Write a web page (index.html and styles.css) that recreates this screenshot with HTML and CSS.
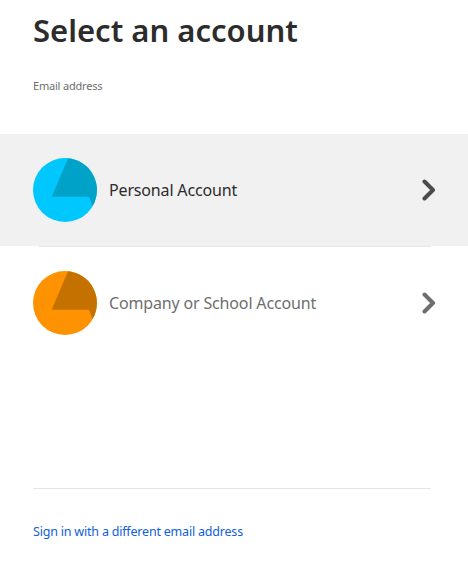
FILE: index.html
```html
<!DOCTYPE html>
<html lang="en">
<head>
    <meta charset="UTF-8">
    <title>Select an account</title>
    <link rel="stylesheet" href="styles.css">
</head>
<body>
    <div class="page">
        <div class="head">
            <h1 class="title">Select an account</h1>
            <div class="email">Email address</div>
        </div>

        <div class="account-list">
            <div class="account account-active">
                <svg class="avatar" viewBox="0 0 64 64">
                    <circle cx="32" cy="32" r="32" fill="#00c8ff"/>
                    <path d="M35 .2A32 32 0 0 1 59.6 48L56 38.7H18.7Z" fill="#00a3c7"/>
                </svg>
                <span class="account-name">Personal Account</span>
                <svg class="chevron" viewBox="0 0 14 22">
                    <path d="M2.5 2.5 L11 11 L2.5 19.5"/>
                </svg>
            </div>
            <div class="account">
                <svg class="avatar" viewBox="0 0 64 64">
                    <circle cx="32" cy="32" r="32" fill="#ff9200"/>
                    <path d="M35 .2A32 32 0 0 1 59.6 48L56 38.7H18.7Z" fill="#c47100"/>
                </svg>
                <span class="account-name">Company or School Account</span>
                <svg class="chevron" viewBox="0 0 14 22">
                    <path d="M2.5 2.5 L11 11 L2.5 19.5"/>
                </svg>
            </div>
        </div>

        <div class="foot">
            <a class="other-link" href="#">Sign in with a different email address</a>
        </div>
    </div>
</body>
</html>
```

FILE: styles.css
```css
* {
    box-sizing: border-box;
}
body {
    margin: 0;
    background: #fff;
    font-family: "Noto Sans", "Open Sans", sans-serif;
    color: #2c2c2c;
}
.page {
    height: 566px;
    overflow: hidden;
}
.head {
    padding: 0 33px;
    height: 134px;
}
.title {
    margin: 0;
    padding-top: 8px;
    font-size: 31px;
    line-height: 44px;
    font-weight: 600;
    color: #2c2c2c;
}
.email {
    margin-top: 25px;
    font-size: 11px;
    letter-spacing: -0.2px;
    line-height: 18px;
    color: #6e6e6e;
}
.account {
    display: flex;
    align-items: center;
    height: 113px;
    padding: 0 32px 0 33px;
    color: #6e6e6e;
}
.account-active {
    height: 112px;
    background: #f1f1f1;
    color: #2c2c2c;
}
.avatar {
    width: 64px;
    height: 64px;
    flex: none;
}
.account-name {
    flex: 1;
    margin-left: 12px;
    font-size: 16px;
    letter-spacing: -0.16px;
}
.chevron {
    width: 14px;
    height: 22px;
    flex: none;
}
.chevron path {
    fill: none;
    stroke: #6e6e6e;
    stroke-width: 4;
    stroke-linecap: round;
    stroke-linejoin: round;
}
.account-active .chevron path {
    stroke: #4b4b4b;
}
.account-list {
    position: relative;
}
.account + .account {
    position: relative;
}
.account + .account::before {
    content: "";
    position: absolute;
    top: 0;
    left: 39px;
    right: 37px;
    border-top: 1px solid #e6e6e6;
}
.foot {
    margin: 129px 37px 0 33px;
    padding-top: 30px;
    border-top: 1px solid #e6e6e6;
}
.other-link {
    font-size: 12.5px;
    letter-spacing: -0.2px;
    line-height: 20px;
    color: #1060d8;
    text-decoration: none;
}
```
